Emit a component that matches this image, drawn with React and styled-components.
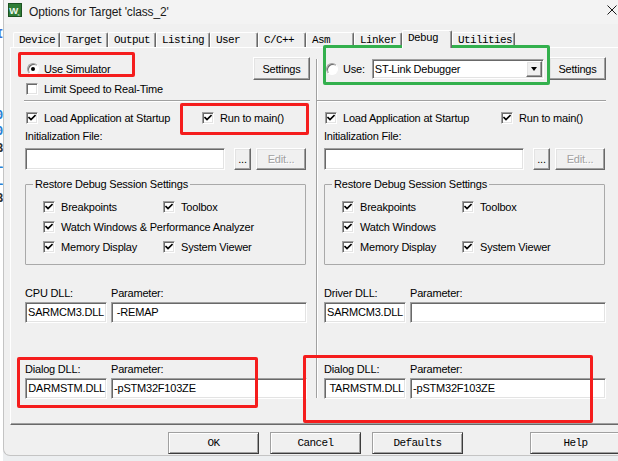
import React from "react";
import styled, { createGlobalStyle, css } from "styled-components";

const GlobalStyle = createGlobalStyle`
  html, body { margin: 0; padding: 0; }
  body {
    width: 618px; height: 461px; overflow: hidden;
    background: #eceef0;
    font-family: "Liberation Sans", Arial, sans-serif;
  }
  #root { height: 461px; }
`;

const textFont = css`
  font-family: "Liberation Sans", Arial, sans-serif;
  font-size: 11px;
  letter-spacing: -0.2px;
  color: #000;
`;

const monoFont = css`
  font-family: "Liberation Mono", "Courier New", monospace;
  font-size: 11px;
  letter-spacing: -0.6px;
  color: #000;
`;

const sunken = css`
  border: 1px solid;
  border-color: #a0a0a0 #ffffff #ffffff #a0a0a0;
  box-shadow: inset 1px 1px #696969, inset -1px -1px #e3e3e3;
`;

const raised = css`
  border: 1px solid;
  border-color: #ffffff #696969 #696969 #ffffff;
  box-shadow: inset -1px -1px #a0a0a0, inset 1px 1px #e3e3e3;
`;

const Page = styled.div`
  position: relative;
  display: flex;
  align-items: flex-start;
  width: 618px;
  height: 461px;
  overflow: hidden;
`;

const Backdrop = styled.div`
  flex: 0 0 3px;
  align-self: stretch;
  background: #ffffff;
  overflow: hidden;
  display: flex;
  flex-direction: column;
`;

const BackGlyph = styled.span`
  font: bold 12px/16.6px "DejaVu Sans Mono", monospace;
  color: ${(p) => p.$c};
  margin-left: -4px;
  margin-top: ${(p) => p.$mt || 0}px;
  white-space: nowrap;
`;

const Window = styled.div`
  flex: 0 0 633px;
  height: 456px;
  box-sizing: border-box;
  border-left: 1px solid #c4c4c4;
  border-bottom: 1px solid #c4c4c4;
  border-bottom-left-radius: 7px;
  background: #f0f0f0;
  display: flex;
  flex-direction: column;
  overflow: hidden;
`;

const TitleBar = styled.div`
  height: 24px;
  display: flex;
  align-items: center;
  padding-left: 4px;
  background: #f3f3f3;
`;

const AppIcon = styled.svg`
  flex: 0 0 14px;
  margin-top: -4px;
`;

const TitleText = styled.span`
  margin-left: 7px;
  font-family: "Liberation Sans", Arial, sans-serif;
  font-size: 12px;
  letter-spacing: -0.15px;
  color: #1a1a1a;
`;

const CloseButton = styled.div`
  margin-left: auto;
  width: 48px;
  height: 24px;
  display: flex;
  align-items: center;
  justify-content: center;
  padding-bottom: 4px;
  box-sizing: border-box;
`;

const Body = styled.div`
  flex: 1;
  display: flex;
  flex-direction: column;
  padding: 5px 6px 0;
`;

const TabStrip = styled.div`
  height: 18px;
  display: flex;
  align-items: flex-end;
  padding-left: 3px;
`;

const Tab = styled.div`
  box-sizing: border-box;
  width: ${(p) => p.$w}px;
  height: ${(p) => (p.$active ? 18 : 15)}px;
  padding: 1px 0 0 5px;
  border-top: 1px solid #ffffff;
  border-left: 1px solid #ffffff;
  border-right: 1px solid #696969;
  box-shadow: inset -1px 0 #a0a0a0;
  border-top-left-radius: 2px;
  border-top-right-radius: 2px;
  background: #f0f0f0;
  ${monoFont};
  line-height: 12px;
  white-space: nowrap;
  ${(p) =>
    p.$active &&
    css`
      margin-bottom: -1px;
      position: relative;
      z-index: 1;
    `}
`;

const Panel = styled.div`
  display: flex;
  align-items: flex-start;
  width: 620px;
  height: 378px;
  box-sizing: border-box;
  border: 1px solid;
  border-color: #ffffff #696969 #696969 #ffffff;
  box-shadow: inset -1px -1px #a0a0a0;
  background: #f0f0f0;
`;

const Column = styled.div`
  flex: 0 0 ${(p) => p.$w}px;
  box-sizing: border-box;
  display: flex;
  flex-direction: column;
  padding: 9px ${(p) => p.$pr}px 0 ${(p) => p.$pl}px;
`;

const ColumnDivider = styled.div`
  flex: 0 0 1px;
  margin-top: 11px;
  height: 339px;
  background: #a0a0a0;
  border-right: 1px solid #ffffff;
`;

const TopRow = styled.div`
  height: 23px;
  display: flex;
  align-items: center;
`;

const SmallRow = styled.div`
  height: 13px;
  margin-top: 2px;
  display: flex;
  align-items: center;
`;

const Separator = styled.div`
  margin: 5px 0 0 -${(p) => p.$bleed}px;
  border-top: 1px solid #a0a0a0;
  border-bottom: 1px solid #ffffff;
`;

const LoadRow = styled.div`
  margin-top: 8px;
  height: 16px;
  display: grid;
  grid-template-columns: 176px auto;
  align-items: center;
`;

const FieldLabel = styled.div`
  ${textFont};
  line-height: 14px;
  margin-top: 3px;
  white-space: nowrap;
`;

const InitRow = styled.div`
  margin-top: 5px;
  display: flex;
  align-items: center;
`;

const Field = styled.div`
  box-sizing: border-box;
  flex: 0 0 auto;
  width: ${(p) => p.$w}px;
  height: ${(p) => p.$h}px;
  line-height: ${(p) => p.$h - 2}px;
  background: #ffffff;
  ${sunken};
  padding: 0 2px;
  overflow: hidden;
  white-space: pre;
  ${textFont};
  ${(p) =>
    p.$end &&
    css`
      direction: rtl;
      text-align: right;
      padding: 0 1px 0 3px;
    `}
`;

const PushButton = styled.button`
  box-sizing: border-box;
  flex: 0 0 auto;
  width: ${(p) => p.$w}px;
  height: ${(p) => p.$h}px;
  margin: 0 0 0 ${(p) => p.$ml || 0}px;
  padding: 0;
  background: #f0f0f0;
  ${raised};
  ${textFont};
  display: flex;
  align-items: center;
  justify-content: center;
  white-space: nowrap;
  &:disabled {
    color: #a0a0a0;
    text-shadow: 1px 1px #ffffff;
  }
`;

const DialogButton = styled(PushButton)`
  ${monoFont};
  border-color: #a0a0a0 #3c3c3c #3c3c3c #a0a0a0;
  box-shadow: inset 1px 1px #ffffff, inset -1px -1px #a0a0a0;
`;

const SettingsButton = styled(PushButton)`
  margin-left: auto;
`;

const Combo = styled.div`
  box-sizing: border-box;
  width: 172px;
  height: 20px;
  margin-left: 7px;
  background: #ffffff;
  ${sunken};
  display: flex;
  align-items: center;
  padding: 0 1px 0 2px;
`;

const ComboText = styled.span`
  flex: 1;
  ${textFont};
  white-space: nowrap;
`;

const DropButton = styled.span`
  box-sizing: border-box;
  width: 16px;
  height: 16px;
  background: #f0f0f0;
  ${raised};
  display: flex;
  align-items: center;
  justify-content: center;
`;

const DropArrow = styled.span`
  width: 0;
  height: 0;
  border-left: 3.5px solid transparent;
  border-right: 3.5px solid transparent;
  border-top: 4px solid #000;
`;

const Group = styled.fieldset`
  box-sizing: border-box;
  width: 281px;
  margin: 7px 0 0;
  padding: 0;
  border: 1px solid #a9a9a9;
  border-radius: 1px;
`;

const Legend = styled.legend`
  margin-left: 7px;
  padding: 0 2px;
  ${textFont};
  line-height: 14px;
`;

const GroupGrid = styled.div`
  display: grid;
  grid-template-columns: 120px auto;
  grid-auto-rows: 20px;
  align-items: center;
  padding: 5px 0 8px 16px;
`;

const GroupCell = styled.div`
  grid-column: ${(p) => (p.$span ? "1 / -1" : "auto")};
`;

const DllLabels = styled.div`
  margin-top: ${(p) => p.$mt}px;
  display: grid;
  grid-template-columns: 82px 196px;
  column-gap: 4px;
  ${textFont};
  line-height: 14px;
  white-space: nowrap;
`;

const DllFields = styled.div`
  margin-top: 2px;
  display: grid;
  grid-template-columns: 82px 196px;
  column-gap: 4px;
`;

const OptionLabel = styled.label`
  display: inline-flex;
  align-items: center;
  gap: ${(p) => p.$gap}px;
  white-space: nowrap;
  ${textFont};
`;

const CheckBox = styled.span`
  box-sizing: border-box;
  flex: 0 0 12px;
  width: 12px;
  height: 12px;
  margin-left: 1px;
  background: #ffffff;
  ${sunken};
  display: flex;
  align-items: center;
  justify-content: center;
`;

const Radio = styled.span`
  box-sizing: border-box;
  flex: 0 0 12px;
  width: 12px;
  height: 12px;
  margin-left: 2px;
  border-radius: 50%;
  background: #ffffff;
  border: 1px solid;
  border-color: #a0a0a0 #ffffff #ffffff #a0a0a0;
  box-shadow: inset 1px 1px #696969;
  display: flex;
  align-items: center;
  justify-content: center;
  &::after {
    content: "";
    width: 4px;
    height: 4px;
    border-radius: 50%;
    background: ${(p) => (p.$on ? "#000" : "transparent")};
  }
`;

const ButtonBar = styled.div`
  margin-top: 7px;
  padding-left: 158px;
  display: flex;
  gap: 11px;
`;

const HelpButton = styled(DialogButton)`
  margin-left: 56px;
`;

const Annotation = styled.div`
  position: absolute;
  left: ${(p) => p.$x}px;
  top: ${(p) => p.$y}px;
  width: ${(p) => p.$w}px;
  height: ${(p) => p.$h}px;
  box-sizing: border-box;
  border: 3px solid ${(p) => p.$c};
  border-radius: 2px;
  pointer-events: none;
`;

function CheckMark() {
  return (
    <svg width="8" height="8" viewBox="0 0 8 8">
      <polyline
        points="1,3.6 3,5.6 7,1.6"
        fill="none"
        stroke="#000"
        strokeWidth="1.7"
        strokeLinecap="square"
      />
    </svg>
  );
}

function Option({ kind = "check", checked, label }) {
  return (
    <OptionLabel $gap={kind === "radio" ? 5 : 6}>
      {kind === "radio" ? (
        <Radio $on={checked} />
      ) : (
        <CheckBox>{checked && <CheckMark />}</CheckBox>
      )}
      <span>{label}</span>
    </OptionLabel>
  );
}

function DllBlock({ mt, label, value, param, scrollEnd }) {
  return (
    <>
      <DllLabels $mt={mt}>
        <span>{label}</span>
        <span>Parameter:</span>
      </DllLabels>
      <DllFields>
        <Field $w={82} $h={21} $end={scrollEnd}>
          {value}
        </Field>
        <Field $w={196} $h={21}>
          {param}
        </Field>
      </DllFields>
    </>
  );
}

function DebugColumn({ cfg }) {
  return (
    <Column $w={cfg.width} $pl={cfg.padL} $pr={cfg.padR}>
      <TopRow>{cfg.top}</TopRow>
      <SmallRow>
        {cfg.limit && <Option label="Limit Speed to Real-Time" />}
      </SmallRow>
      <Separator $bleed={cfg.bleed} />
      <LoadRow>
        <Option checked label="Load Application at Startup" />
        <Option checked label="Run to main()" />
      </LoadRow>
      <FieldLabel>Initialization File:</FieldLabel>
      <InitRow>
        <Field $w={200} $h={22} />
        <PushButton $w={17} $h={22} $ml={9}>
          ...
        </PushButton>
        <PushButton $w={50} $h={22} $ml={5} disabled>
          Edit...
        </PushButton>
      </InitRow>
      <Group>
        <Legend>Restore Debug Session Settings</Legend>
        <GroupGrid>
          {cfg.groupRows.map((row) =>
            row.map((item) => (
              <GroupCell key={item} $span={row.length === 1}>
                <Option checked label={item} />
              </GroupCell>
            ))
          )}
        </GroupGrid>
      </Group>
      <DllBlock mt={21} {...cfg.dll1} />
      <DllBlock mt={39} {...cfg.dll2} />
    </Column>
  );
}

const tabs = [
  { label: "Device", w: 47 },
  { label: "Target", w: 48 },
  { label: "Output", w: 48 },
  { label: "Listing", w: 54 },
  { label: "User", w: 48 },
  { label: "C/C++", w: 48 },
  { label: "Asm", w: 48 },
  { label: "Linker", w: 48 },
  { label: "Debug", w: 50, active: true },
  { label: "Utilities", w: 63 },
];

const leftCfg = {
  width: 305,
  padL: 14,
  padR: 6,
  bleed: 1,
  limit: true,
  top: (
    <>
      <Option kind="radio" checked label="Use Simulator" />
      <SettingsButton $w={57} $h={23}>
        Settings
      </SettingsButton>
    </>
  ),
  groupRows: [
    ["Breakpoints", "Toolbox"],
    ["Watch Windows & Performance Analyzer"],
    ["Memory Display", "System Viewer"],
  ],
  dll1: { label: "CPU DLL:", value: "SARMCM3.DLL", param: " -REMAP" },
  dll2: {
    label: "Dialog DLL:",
    value: "DARMSTM.DLL",
    param: "-pSTM32F103ZE",
    scrollEnd: true,
  },
};

const rightCfg = {
  width: 311,
  padL: 6,
  padR: 23,
  bleed: 7,
  limit: false,
  top: (
    <>
      <Option kind="radio" label="Use:" />
      <Combo>
        <ComboText>ST-Link Debugger</ComboText>
        <DropButton>
          <DropArrow />
        </DropButton>
      </Combo>
      <SettingsButton $w={57} $h={23}>
        Settings
      </SettingsButton>
    </>
  ),
  groupRows: [
    ["Breakpoints", "Toolbox"],
    ["Watch Windows"],
    ["Memory Display", "System Viewer"],
  ],
  dll1: { label: "Driver DLL:", value: "SARMCM3.DLL", param: "" },
  dll2: {
    label: "Dialog DLL:",
    value: "TARMSTM.DLL",
    param: "-pSTM32F103ZE",
    scrollEnd: true,
  },
};

const backGlyphs = [
  { t: "I", c: "#3b6fd6", mt: 26 },
  { t: "0", c: "#2a7fd4", mt: 64 },
  { t: "0", c: "#2a7fd4" },
  { t: "B", c: "#333333" },
  { t: "L", c: "#2a7fd4" },
  { t: "L", c: "#2a7fd4" },
  { t: "B", c: "#333333" },
];

const annotations = [
  { x: 18, y: 52, w: 117, h: 25, c: "#f51d1d" },
  { x: 180, y: 103, w: 129, h: 32, c: "#f51d1d" },
  { x: 17, y: 357, w: 241, h: 51, c: "#f51d1d" },
  { x: 303, y: 355, w: 290, h: 68, c: "#f51d1d" },
  { x: 323, y: 45, w: 227, h: 40, c: "#33b04d" },
];

export default function App() {
  return (
    <>
      <GlobalStyle />
      <Page>
        <Backdrop>
          {backGlyphs.map((g, i) => (
            <BackGlyph key={i} $c={g.c} $mt={g.mt}>
              {g.t}
            </BackGlyph>
          ))}
        </Backdrop>
        <Window>
          <TitleBar>
            <AppIcon width="14" height="14" viewBox="0 0 14 14">
              <rect x="0.5" y="0.5" width="13" height="13" fill="#2f7d36" stroke="#1c5222" />
              <text
                x="1.2"
                y="10.5"
                fontSize="9.5"
                fontWeight="bold"
                fill="#eef7ee"
                fontFamily="Liberation Sans, Arial, sans-serif"
              >
                W
              </text>
              <text x="9.6" y="12.6" fontSize="4" fill="#ffffff" fontFamily="Liberation Sans, Arial, sans-serif">
                s
              </text>
            </AppIcon>
            <TitleText>Options for Target 'class_2'</TitleText>
            <CloseButton>
              <svg width="10" height="10" viewBox="0 0 10 10">
                <path d="M0.5 0.5 L9.5 9.5 M9.5 0.5 L0.5 9.5" stroke="#1a1a1a" strokeWidth="1" />
              </svg>
            </CloseButton>
          </TitleBar>
          <Body>
            <TabStrip>
              {tabs.map((t) => (
                <Tab key={t.label} $w={t.w} $active={t.active}>
                  {t.label}
                </Tab>
              ))}
            </TabStrip>
            <Panel>
              <DebugColumn cfg={leftCfg} />
              <ColumnDivider />
              <DebugColumn cfg={rightCfg} />
            </Panel>
            <ButtonBar>
              <DialogButton $w={91} $h={22}>OK</DialogButton>
              <DialogButton $w={91} $h={22}>Cancel</DialogButton>
              <DialogButton $w={91} $h={22}>Defaults</DialogButton>
              <HelpButton $w={91} $h={22}>Help</HelpButton>
            </ButtonBar>
          </Body>
        </Window>
        {annotations.map((a, i) => (
          <Annotation key={i} $x={a.x} $y={a.y} $w={a.w} $h={a.h} $c={a.c} />
        ))}
      </Page>
    </>
  );
}
